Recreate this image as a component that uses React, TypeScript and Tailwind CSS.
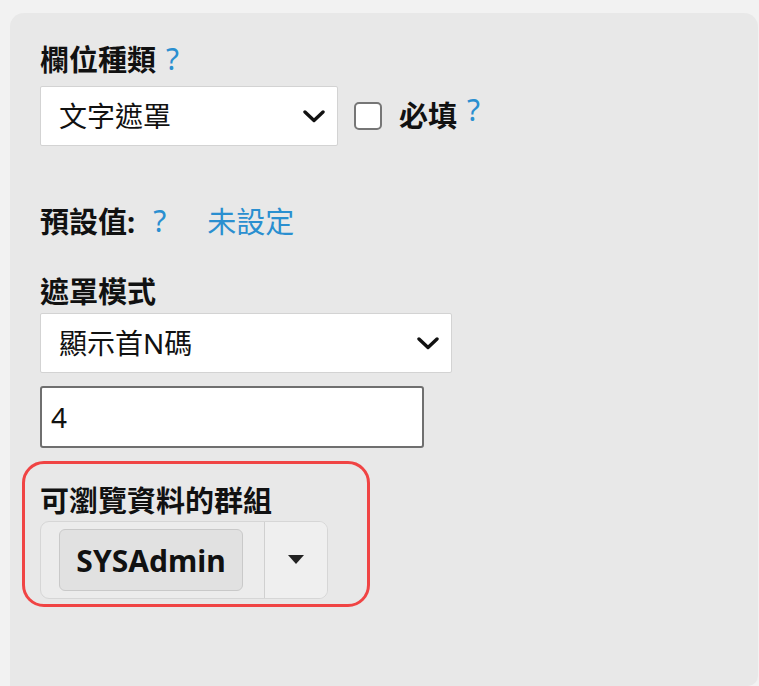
import React from "react";

const cjk = { fontFamily: '"Noto Sans", "Noto Sans CJK TC", sans-serif' };

function Chevron() {
  return (
    <svg width="22" height="13" viewBox="0 0 22 13" fill="none">
      <path d="M2 2l9 8.5L20 2" stroke="#111" strokeWidth="3.4" strokeLinecap="round" strokeLinejoin="round" />
    </svg>
  );
}

function Help({ className = "" }: { className?: string }) {
  return <span className={`font-normal text-[#2a8fd0] ${className}`}>?</span>;
}

function SelectBox({ value, width }: { value: string; width: string }) {
  return (
    <div
      className={`${width} h-[60px] bg-white border border-[#d3d3d3] rounded-[2px] flex items-center justify-between pl-[18px] pr-[12px] text-[28px] text-[#111]`}
    >
      <span>{value}</span>
      <Chevron />
    </div>
  );
}

export default function App() {
  return (
    <div className="min-h-screen bg-[#f2f2f2] pt-[13px] pl-[10px] pr-px" style={cjk}>
      <div className="bg-[#e8e8e8] rounded-t-[14px] rounded-br-[10px] h-[673px] pl-[30px] pt-[31px]">
        <div className="flex items-center gap-[10px] h-[30px] text-[29px] font-bold text-[#111] leading-none">
          <span>欄位種類</span>
          <Help className="text-[30px]" />
        </div>

        <div className="flex items-center mt-[12px]">
          <SelectBox value="文字遮罩" width="w-[298px]" />
          <div className="ml-[16px] w-[28px] h-[28px] border-2 border-[#767676] rounded-[5px] bg-white" />
          <span className="ml-[17px] text-[29px] font-bold text-[#111]">必填</span>
          <span className="ml-[10px] -mt-[14px] text-[30px] text-[#2a8fd0]">?</span>
        </div>

        <div className="flex items-center h-[30px] mt-[60px] text-[29px] leading-none">
          <span className="font-bold text-[#111]">預設值:</span>
          <Help className="ml-[18px] text-[30px]" />
          <span className="ml-[41px] text-[#2a8fd0]">未設定</span>
        </div>

        <div className="h-[30px] mt-[40px] text-[29px] font-bold text-[#111] leading-none flex items-center">
          遮罩模式
        </div>

        <div className="mt-[7px]">
          <SelectBox value="顯示首N碼" width="w-[412px]" />
        </div>

        <div className="mt-[13px] w-[384px] h-[62px] bg-white border-2 border-[#6f6f6f] rounded-[3px] flex items-center pl-[9px] text-[28px] text-[#111]">
          4
        </div>

        <div className="-ml-[18px] mt-[13px] w-[348px] h-[146px] border-[3px] border-[#f04444] rounded-[22px] pl-[15px] pt-[21px]">
          <div className="h-[30px] text-[29px] font-bold text-[#111] leading-none flex items-center">
            可瀏覽資料的群組
          </div>
          <div className="mt-[6px] w-[288px] h-[78px] flex border border-[#d6d6d6] rounded-[9px] bg-[#ececec] overflow-hidden">
            <div className="flex-1 flex items-center pl-[18px] border-r border-[#d0d0d0]">
              <div className="h-[62px] w-[184px] flex items-center justify-center bg-[#e1e1e1] border border-[#c9c9c9] rounded-[6px] text-[30px] font-bold text-[#111]">
                SYSAdmin
              </div>
            </div>
            <div className="w-[62px] flex items-center justify-center bg-[#efefef]">
              <svg width="16" height="10" viewBox="0 0 16 10">
                <path d="M0 0h16L8 9z" fill="#222" />
              </svg>
            </div>
          </div>
        </div>
      </div>
    </div>
  );
}
